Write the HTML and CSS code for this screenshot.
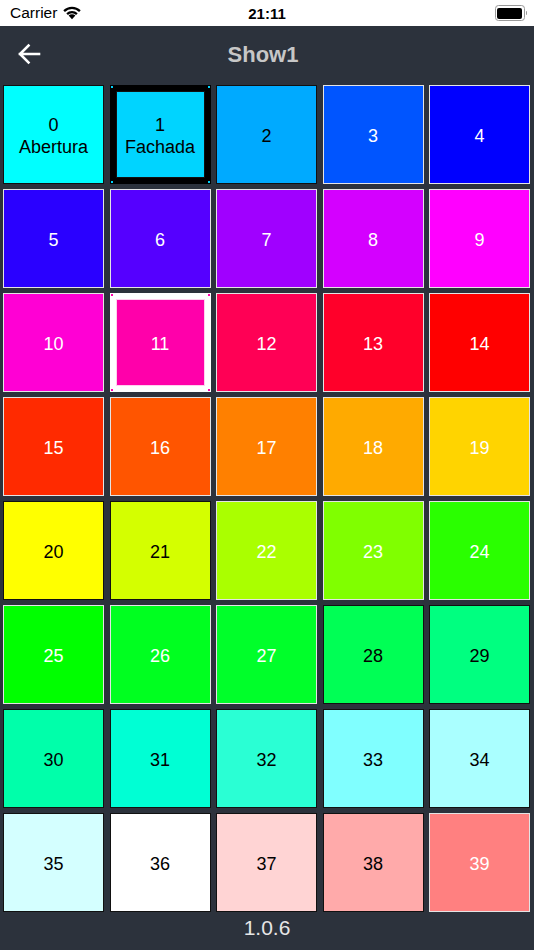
FILE: index.html
```html
<!DOCTYPE html>
<html>
<head>
<meta charset="utf-8">
<link rel="stylesheet" href="styles.css">
</head>
<body>
<div class="status">
  <div class="status-left">
    <span class="carrier">Carrier</span>
    <svg class="wifi" width="20" height="15" viewBox="0 0 20 15">
      <path d="M10 14.2 L6.6 10.6 A4.9 4.9 0 0 1 13.4 10.6 Z" fill="#000"/>
      <path d="M4.3 8.2 A8.2 8.2 0 0 1 15.7 8.2 L14.1 9.9 A6 6 0 0 0 5.9 9.9 Z" fill="#000"/>
      <path d="M1.3 5.2 A12.5 12.5 0 0 1 18.7 5.2 L17.1 6.9 A10.2 10.2 0 0 0 2.9 6.9 Z" fill="#000"/>
    </svg>
  </div>
  <div class="clock">21:11</div>
  <div class="status-right">
    <div class="battery"><div class="battery-fill"></div></div>
    <div class="battery-nub"></div>
  </div>
</div>
<div class="nav">
  <svg class="back" width="24" height="22" viewBox="0 0 24 22">
    <path d="M22 11 H3 M11.5 2.5 L3 11 L11.5 19.5" fill="none" stroke="#fff" stroke-width="2.6" stroke-linecap="square"/>
  </svg>
  <div class="title">Show1</div>
</div>
<div class="grid">
  <div class="tile dark" style="background:#00ffff"><span>0<br>Abertura</span></div>
  <div class="tile sel sel-black"><div class="inner dark" style="background:#00d4ff"><span>1<br>Fachada</span></div><i class="dot tl" style="background:#00d4ff"></i><i class="dot tr" style="background:#00d4ff"></i><i class="dot bl" style="background:#00d4ff"></i><i class="dot br" style="background:#00d4ff"></i></div>
  <div class="tile dark" style="background:#00aaff"><span>2</span></div>
  <div class="tile light" style="background:#0055ff"><span>3</span></div>
  <div class="tile light" style="background:#0000ff"><span>4</span></div>

  <div class="tile light" style="background:#2a00ff"><span>5</span></div>
  <div class="tile light" style="background:#5500ff"><span>6</span></div>
  <div class="tile light" style="background:#a000ff"><span>7</span></div>
  <div class="tile light" style="background:#d400ff"><span>8</span></div>
  <div class="tile light" style="background:#ff00ff"><span>9</span></div>

  <div class="tile light" style="background:#ff00d4"><span>10</span></div>
  <div class="tile sel sel-white"><div class="inner light" style="background:#ff00aa"><span>11</span></div><i class="dot tl" style="background:#ff00aa"></i><i class="dot tr" style="background:#ff00aa"></i><i class="dot bl" style="background:#ff00aa"></i><i class="dot br" style="background:#ff00aa"></i></div>
  <div class="tile light" style="background:#ff0055"><span>12</span></div>
  <div class="tile light" style="background:#ff002a"><span>13</span></div>
  <div class="tile light" style="background:#ff0000"><span>14</span></div>

  <div class="tile light" style="background:#ff2a00"><span>15</span></div>
  <div class="tile light" style="background:#ff5500"><span>16</span></div>
  <div class="tile light" style="background:#ff8000"><span>17</span></div>
  <div class="tile light" style="background:#ffaa00"><span>18</span></div>
  <div class="tile light" style="background:#ffd400"><span>19</span></div>

  <div class="tile dark" style="background:#ffff00"><span>20</span></div>
  <div class="tile dark" style="background:#d4ff00"><span>21</span></div>
  <div class="tile light" style="background:#aaff00"><span>22</span></div>
  <div class="tile light" style="background:#80ff00"><span>23</span></div>
  <div class="tile light" style="background:#2aff00"><span>24</span></div>

  <div class="tile light" style="background:#00ff00"><span>25</span></div>
  <div class="tile light" style="background:#00ff20"><span>26</span></div>
  <div class="tile light" style="background:#00ff2a"><span>27</span></div>
  <div class="tile dark" style="background:#00ff55"><span>28</span></div>
  <div class="tile dark" style="background:#00ff80"><span>29</span></div>

  <div class="tile dark" style="background:#00ffaa"><span>30</span></div>
  <div class="tile dark" style="background:#00ffd4"><span>31</span></div>
  <div class="tile dark" style="background:#2affd4"><span>32</span></div>
  <div class="tile dark" style="background:#80ffff"><span>33</span></div>
  <div class="tile dark" style="background:#aaffff"><span>34</span></div>

  <div class="tile dark" style="background:#d4ffff"><span>35</span></div>
  <div class="tile dark" style="background:#ffffff"><span>36</span></div>
  <div class="tile dark" style="background:#ffd4d4"><span>37</span></div>
  <div class="tile dark" style="background:#ffaaaa"><span>38</span></div>
  <div class="tile light" style="background:#ff8080"><span>39</span></div>
</div>
<div class="version">1.0.6</div>
</body>
</html>
```
FILE: styles.css
```css
html, body {
  margin: 0;
  padding: 0;
}
body {
  width: 534px;
  height: 950px;
  background: #2c323c;
  font-family: "Liberation Sans", Arial, sans-serif;
  overflow: hidden;
}
.status {
  height: 26px;
  background: #fff;
  display: flex;
  align-items: center;
  justify-content: space-between;
  padding: 0 7px 0 10px;
  position: relative;
}
.status-left {
  display: flex;
  align-items: center;
  gap: 5px;
}
.carrier {
  font-size: 15.5px;
  color: #000;
}
.wifi {
  margin-top: -1px;
}
.clock {
  position: absolute;
  left: 0;
  right: 0;
  text-align: center;
  font-size: 15px;
  font-weight: bold;
  color: #000;
  pointer-events: none;
}
.status-right {
  display: flex;
  align-items: center;
}
.battery {
  width: 25px;
  height: 11px;
  border: 1.5px solid #999;
  border-radius: 3.5px;
  padding: 1.5px;
  box-sizing: content-box;
}
.battery-fill {
  width: 100%;
  height: 100%;
  background: #000;
  border-radius: 2px;
}
.battery-nub {
  width: 1.5px;
  height: 4px;
  background: #999;
  border-radius: 0 1px 1px 0;
  margin-left: 1px;
}
.nav {
  height: 56px;
  display: flex;
  align-items: center;
  justify-content: center;
  position: relative;
}
.back {
  position: absolute;
  left: 17px;
  top: 17px;
}
.title {
  font-size: 22px;
  font-weight: bold;
  color: #c7c7c7;
  margin-top: 1px;
  margin-right: 8px;
}
.grid {
  display: grid;
  grid-template-columns: repeat(5, 101px);
  grid-auto-rows: 99px;
  column-gap: 5.5px;
  row-gap: 5px;
  padding: 3px 4px 0 3px;
}
.tile {
  box-sizing: border-box;
  display: flex;
  align-items: center;
  justify-content: center;
  text-align: center;
  font-size: 18px;
  line-height: 22px;
  padding-top: 2px;
  position: relative;
}
.tile.dark {
  border: 1px solid #111;
  color: #000;
}
.tile.light {
  border: 1px solid #e4e4e4;
  color: #fff;
}
.tile.sel {
  padding: 6px;
  align-items: stretch;
  justify-content: stretch;
}
.sel-black {
  background: #000;
}
.sel-white {
  background: #fff;
}
.inner {
  flex: 1;
  box-sizing: border-box;
  display: flex;
  align-items: center;
  justify-content: center;
  padding-top: 2px;
}
.inner.dark {
  border: 1px solid #111;
  color: #000;
}
.inner.light {
  border: 1px solid #ffd0ee;
  color: #fff;
}
.dot {
  position: absolute;
  width: 2px;
  height: 2px;
}
.dot.tl { left: 1px; top: 1px; }
.dot.tr { right: 1px; top: 1px; }
.dot.bl { left: 1px; bottom: 1px; }
.dot.br { right: 1px; bottom: 1px; }
.version {
  text-align: center;
  font-size: 21px;
  color: #e6e6e6;
  margin-top: 4px;
}
```
